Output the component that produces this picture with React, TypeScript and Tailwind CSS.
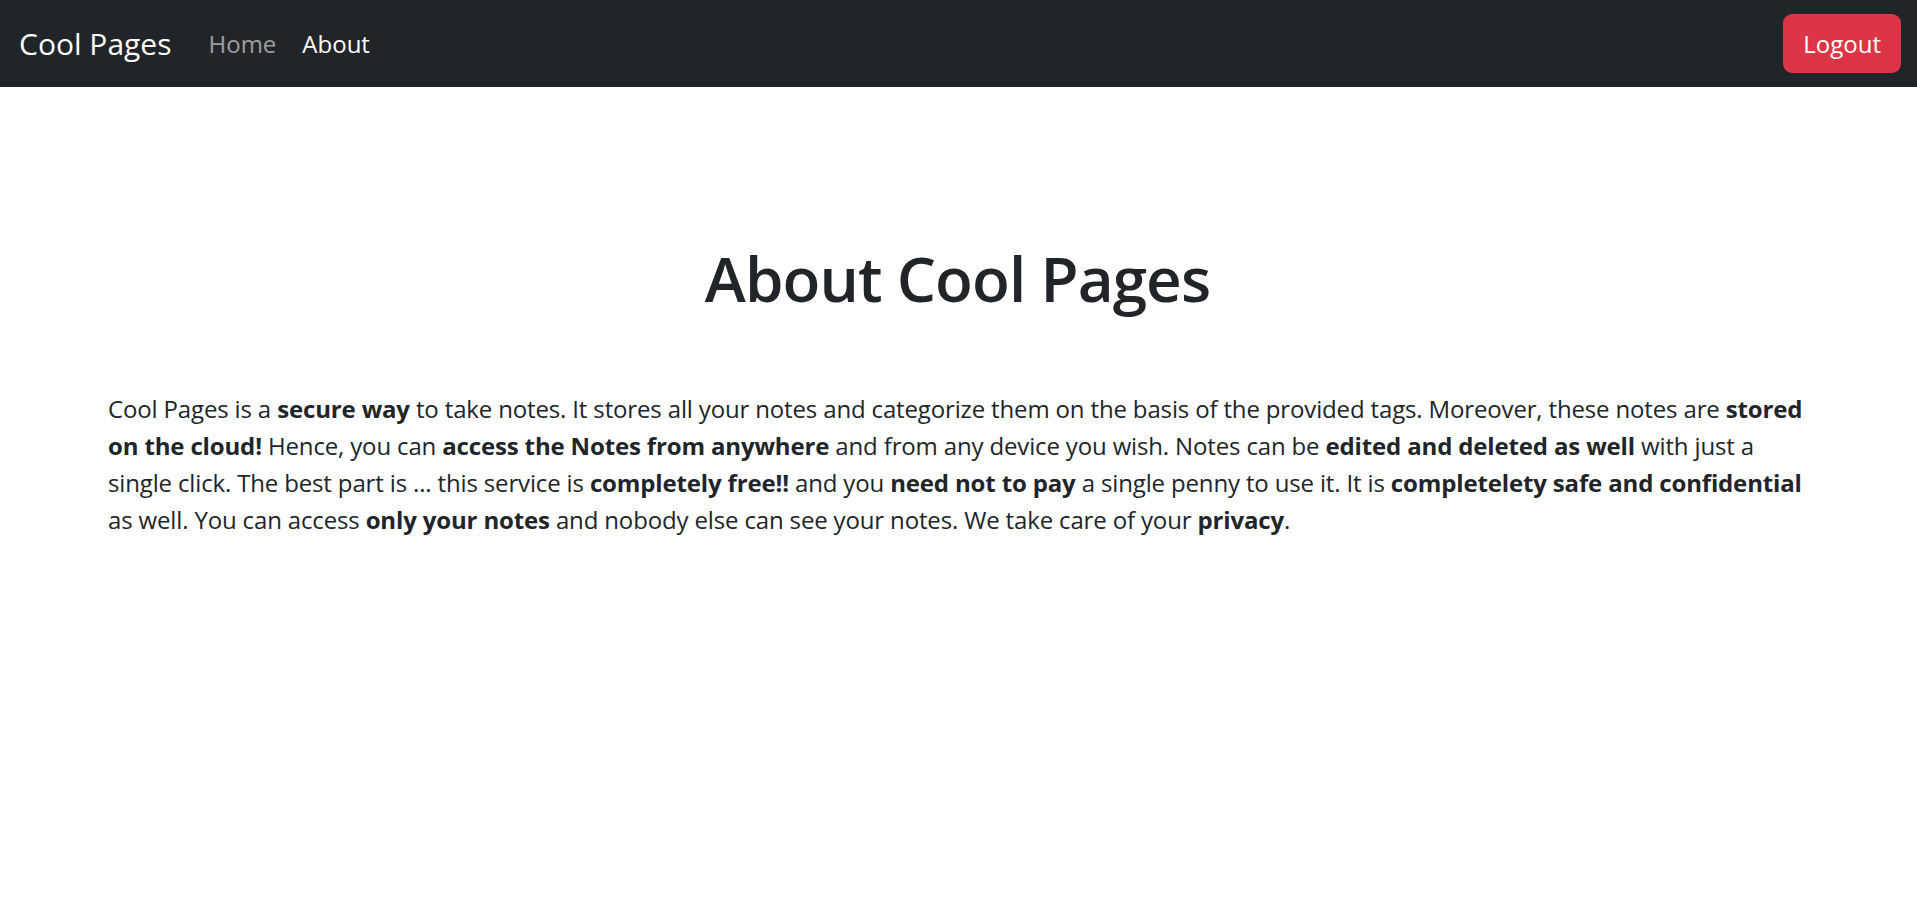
import React from 'react';

const font = { fontFamily: '"Open Sans", "Noto Sans", sans-serif' };

const Navbar: React.FC = () => {
  return (
    <nav className="h-[87px] bg-[#212529] flex items-center justify-between pl-[19px] pr-[16px]">
      <div className="flex items-center">
        <a href="#" className="text-[30px] text-white leading-none">
          Cool Pages
        </a>
        <div className="flex items-center ml-[37px] gap-[26px] text-[24px]">
          <a href="#" className="text-white/55">Home</a>
          <a href="#" className="text-white">About</a>
        </div>
      </div>
      <button className="h-[59px] px-[20px] rounded-[9px] bg-[#dc3545] text-white text-[24px]">
        Logout
      </button>
    </nav>
  );
};

const About: React.FC = () => {
  return (
    <div className="pl-[108px] pr-[110px] text-[#212529]">
      <h1 className="mt-[154px] text-center text-[62px] leading-[1.2] font-semibold tracking-[-0.015em]">
        About Cool Pages
      </h1>
      <p className="mt-[75px] text-[24px] leading-[37px] tracking-[-0.15px]">
        Cool Pages is a <b>secure way</b> to take notes. It stores all your notes and categorize them on
        the basis of the provided tags. Moreover, these notes are <b>stored on the cloud!</b> Hence, you
        can <b>access the Notes from anywhere</b> and from any device you wish. Notes can be{' '}
        <b>edited and deleted as well</b> with just a single click. The best part is ... this service is{' '}
        <b>completely free!!</b> and you <b>need not to pay</b> a single penny to use it. It is{' '}
        <b>completelety safe and confidential</b> as well. You can access <b>only your notes</b> and
        nobody else can see your notes. We take care of your <b>privacy</b>.
      </p>
    </div>
  );
};

export default function App() {
  return (
    <div className="min-h-screen bg-white" style={font}>
      <Navbar />
      <About />
    </div>
  );
}
